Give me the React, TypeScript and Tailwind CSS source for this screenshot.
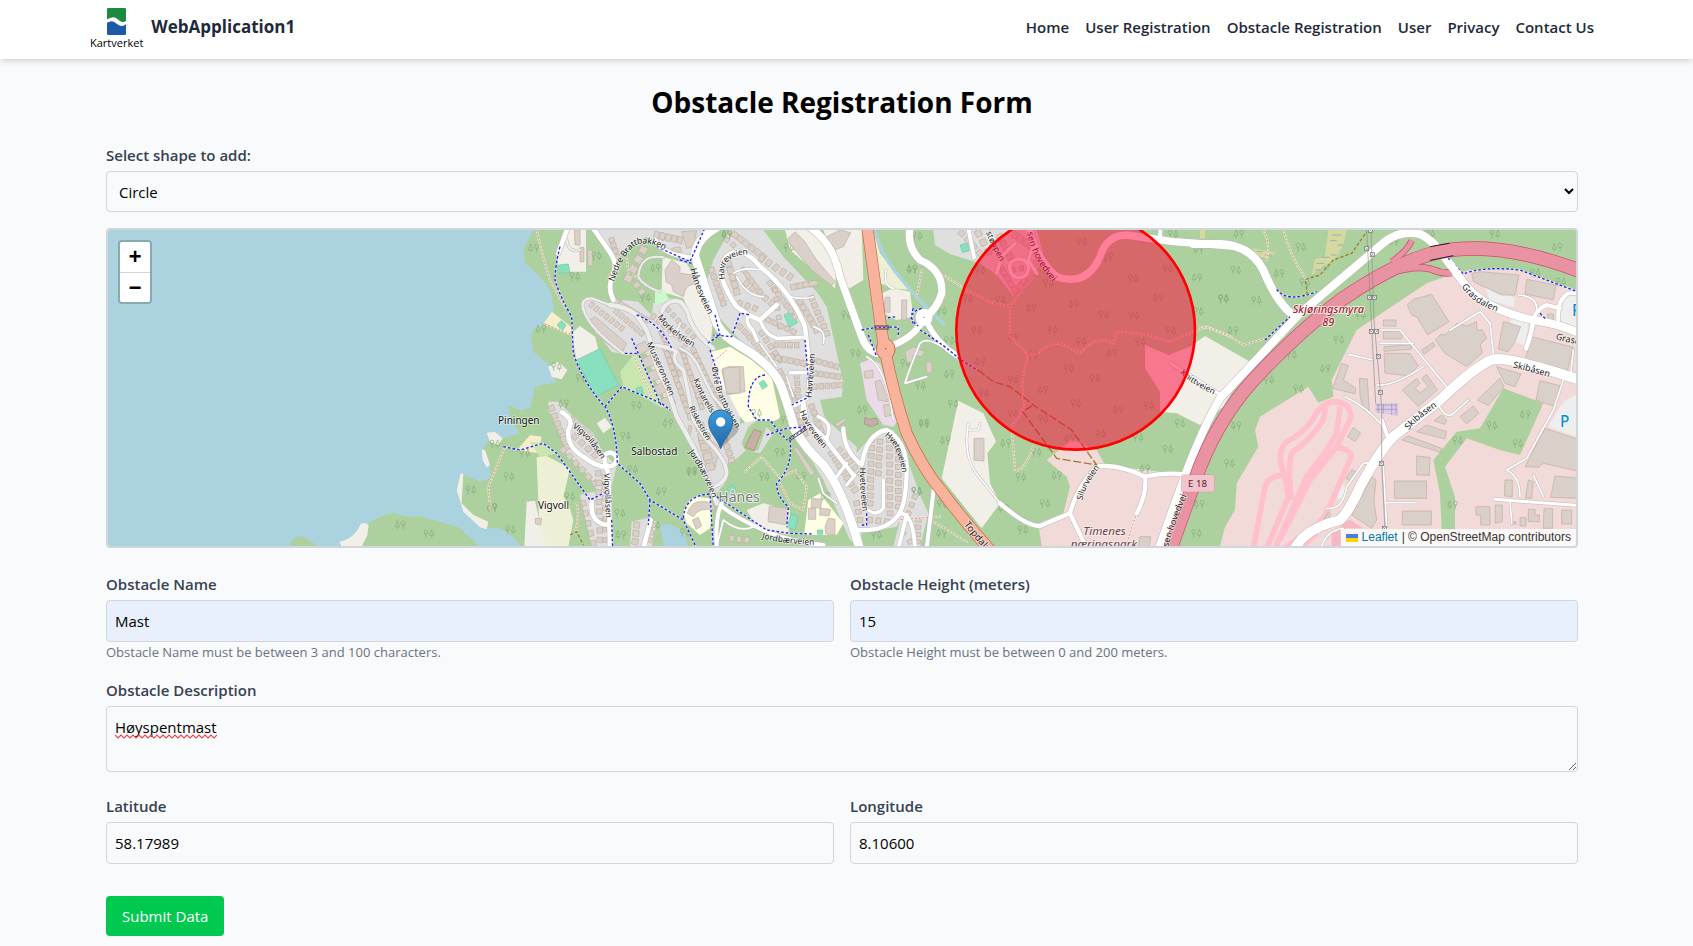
import { useState, type ReactNode } from "react";

/* ------------------------------------------------------------------ */
/* Map data: each sheet has its own origin inside the map drawing.     */
/* ------------------------------------------------------------------ */

type Sheet = "S" | "W" | "H" | "C" | "E";

const ORIGIN: Record<Sheet, string> = {
  S: "translate(-24 -30)",
  W: "translate(1116 -30)",
  H: "translate(1716 -30)",
  C: "translate(2376 -30)",
  E: "translate(3276 -30)",
};

const GREEN = "#add19e";
const WATER = "#aad3df";
const BARE = "#f2efe9";
const HOMES = "#e0dfdf";
const TRADE = "#f2dad9";
const SCHOOL = "#ffffe5";
const FIELD = "#eef0d5";
const PITCH = "#88e0be";
const PAVED = "#eeeeee";

const areas: [Sheet, string, string][] = [
  ["S", GREEN, "M570,980 L575,960 Q600,942 620,955 L655,980Z"],
  ["S", GREEN, "M785,980 L805,910 Q860,875 885,880 Q920,895 955,888 Q1020,905 1075,922 Q1110,950 1138,980Z"],
  ["S", BARE, "M718,965 Q765,955 782,912 Q795,905 806,915 L802,945 785,980 H725Z"],
  ["W", GREEN, "M160,28 L130,90 135,130 175,165 190,182 213,215 222,270 192,315 160,328 152,350 160,395 205,432 230,485 205,492 165,500 152,560 125,572 85,555 90,590 118,640 70,655 45,640 20,638 28,660 5,690 30,740 30,775 0,785 -55,762 -70,800 -60,850 -20,890 20,925 60,925 100,950 122,980 H3400 V28Z"],
  ["W", BARE, "M20,638 L45,636 68,655 55,675 30,665Z M5,688 L15,690 30,735 20,742 8,720Z M-58,760 L-50,762 -55,850 -20,885 25,905 20,928 0,922 -50,875 -70,810Z M205,440 L235,425 262,450 245,478 215,470Z"],
  ["W", WATER, "M540,915 Q570,905 612,935 L624,980 H552Z"],
  ["W", BARE, "M262,30 H318 V155 H235 L232,110Z M275,340 L300,318 345,350 355,388 290,420Z M350,610 L375,593 395,620 370,640Z"],
  ["W", "#f6eec9", "M192,308 L216,275 275,322 270,346Z M112,690 L150,645 185,650 175,700Z"],
  ["W", HOMES, "M305,240 Q330,225 350,238 L395,255 430,240 475,245 515,285 520,250 Q545,235 590,235 L640,270 690,370 700,420 780,540 780,640 740,740 735,790 700,830 680,780 640,690 590,600 570,565 530,490 500,400 440,405 395,395 330,310Z"],
  ["W", HOMES, "M340,30 L640,30 630,125 545,95 500,50 440,80 410,130 385,90Z"],
  ["W", GREEN, "M500,75 L550,100 545,160 530,210 545,240 515,250 470,235 430,230 405,200 420,150 470,100Z"],
  ["W", BARE, "M548,110 L620,130 655,190 700,290 692,368 650,330 610,235 545,215Z"],
  ["W", "#c8e6ae", "M420,455 L460,405 478,405 548,545 560,570 430,500Z M150,665 L195,670 230,700 180,712Z"],
  ["W", HOMES, "M205,545 L235,545 280,590 340,640 370,700 410,735 395,800 395,980 345,980 310,850 350,810 330,770 260,700 240,640 205,570Z M300,825 L340,815 395,900 V980 H335Z M455,905 L500,895 530,905 515,980 H450Z"],
  ["W", FIELD, "M170,712 L200,708 270,745 250,830 265,850 280,900 265,980 H180Z"],
  ["W", BARE, "M140,845 L165,842 195,980 H133Z"],
  ["W", SCHOOL, "M610,880 Q620,835 650,830 L690,835 696,870 690,925 660,945 620,910Z"],
  ["W", "#c8facc", "M525,215 L550,205 568,240 525,255Z"],
  ["H", HOMES, "M150,30 L250,30 310,110 410,215 440,260 490,490 485,530 420,540 430,580 440,600 530,680 530,700 580,640 640,630 690,740 690,840 650,920 545,940 540,980 510,960 430,780 330,610 320,520 280,440 180,360 115,290 75,200 100,120Z"],
  ["H", HOMES, "M690,740 L722,830 745,880 720,980 H640 L660,900Z"],
  ["H", HOMES, "M0,30 H70 L40,90 0,110Z"],
  ["H", BARE, "M315,30 L400,30 470,120 465,205 330,90Z M430,30 H545 L550,180 500,210 480,160Z"],
  ["H", SCHOOL, "M95,395 L150,380 215,420 275,470 300,590 Q290,610 240,600 L200,612 180,590 150,530 105,480Z"],
  ["H", HOMES, "M185,610 L235,600 280,640 240,700 200,690 165,720 120,690 140,640Z"],
  ["H", GREEN, "M205,620 L235,598 260,620 235,690 200,700 185,670Z"],
  ["H", FIELD, "M580,30 L600,100 690,210 640,205 600,190Z"],
  ["H", BARE, "M605,220 L640,205 690,215 700,290 650,300 610,280Z"],
  ["H", "#ebdbe8", "M540,430 L570,418 600,430 655,600 640,620 610,615 560,540Z"],
  ["H", BARE, "M200,870 L250,850 330,870 325,945 230,920Z"],
  ["H", SCHOOL, "M385,840 L420,820 490,910 470,945 372,945Z"],
  ["C", HOMES, "M100,30 H410 L430,100 410,150 340,228 290,165 240,130 150,102 105,75Z"],
  ["C", BARE, "M175,542 L250,580 288,665 262,700 270,790 300,850 245,925 125,775Z"],
  ["C", TRADE, "M440,720 L515,660 590,690 615,735 860,765 830,980 H425 L415,910 490,880 510,800 500,770Z"],
  ["C", BARE, "M735,375 L805,405 870,380 915,348 1050,425 970,560 900,615 830,580 780,575 V515 L735,445Z"],
  ["E", TRADE, "M680,190 L750,165 810,150 960,150 1140,215 V980 H60 L75,920 105,870 110,790 175,680 165,630 180,590 325,500 355,548 400,530 395,480 420,430 470,330Z"],
  ["E", GREEN, "M910,505 L1030,550 960,705 900,690 800,655 735,740 765,830 V930 H725 L720,820 700,720 770,635 840,625Z"],
  ["E", PAVED, "M1085,225 H1140 V325 L1065,300Z M1140,518 L1090,545 1045,620 1140,655Z M850,190 L945,235 940,262 870,240Z M932,290 L985,310 975,378 935,360Z M420,795 L445,800 430,840 408,832Z"],
  ["E", "#d6d99f", "M385,30 H440 L430,75 410,110 335,165 345,118 375,110Z M155,85 L228,98 185,122Z M0,30 H15 V55 H0Z"],
  ["E", "#dccbe6", "M527,550 H595 V588 L527,578Z"],
  ["E", "#f8b7c4", "M425,910 L450,900 490,925 H425Z M395,940 L422,925 V978 H395Z"],
];

const pitches: [Sheet, string][] = [
  ["W", "M290,420 L360,386 416,495 348,530Z"],
  ["W", "M235,135 L265,132 270,158 237,160Z M232,315 L244,302 258,315 247,334Z M468,505 L485,500 490,520 470,522Z"],
  ["H", "M312,285 L335,272 353,308 328,322Z M237,490 L250,480 263,497 248,508Z M335,880 L355,890 345,930 320,922Z M412,930 H428 V943 H412Z M142,805 L158,795 170,815 150,825Z"],
  ["C", "M180,75 L203,68 208,92 187,98Z"],
];

const roads: [Sheet, number, string][] = [
  ["W", 12, "M545,275 Q560,235 600,245 Q620,260 630,300 Q650,350 700,385"],
  ["W", 11, "M515,375 Q570,380 590,395 Q570,420 610,450 L625,520 640,600 680,660 Q740,720 740,760 Q735,790 700,800"],
  ["W", 13, "M390,255 Q440,260 470,285 L500,330 515,375 Q520,430 560,500 L590,590 640,680 690,790 710,850"],
  ["W", 8, "M600,310 Q590,340 570,345 M600,385 Q640,400 660,450 L700,530 760,600"],
  ["W", 7, "M310,270 Q300,235 335,235 L390,255 M310,265 Q320,320 430,400 M300,90 Q265,100 260,60"],
  ["H", 26, "M110,22 Q45,60 45,110 L110,310 Q130,350 180,378 Q270,430 300,490 Q320,540 345,630 Q380,690 430,735 Q490,810 540,990"],
  ["W", 14, "M340,25 L385,90 Q415,130 400,160 Q380,200 400,240"],
  ["W", 14, "M640,115 L590,105 Q550,95 525,60"],
  ["W", 14, "M245,577 Q285,600 265,630 Q260,680 310,710 Q350,742 380,740 Q412,740 410,712 Q395,688 373,705 Q372,725 385,760 L390,985"],
  ["W", 14, "M335,845 Q330,915 390,915 M512,900 L490,985"],
  ["W", 14, "M262,25 L235,100"],
  ["W", 6, "M550,112 Q480,100 475,170 Q490,200 540,215"],
  ["H", 14, "M180,95 Q120,95 125,170 Q140,220 170,260 L205,285 240,300 290,255 M180,95 Q215,105 240,140 Q330,210 375,320 L390,455 385,530 345,555"],
  ["H", 11, "M240,300 Q255,345 290,355 L370,352 M205,285 Q195,310 218,330 L232,362 M332,458 H390 M370,540 L380,600 445,665 M415,590 Q462,610 440,655 M365,590 L370,540"],
  ["H", 5, "M160,160 Q190,140 240,150 M170,170 Q200,230 250,230 M240,370 L290,440 M330,230 Q370,240 400,230 M320,470 L340,530 M400,320 Q440,330 430,370"],
  ["H", 22, "M390,22 Q460,70 480,170 L545,350 Q560,392 592,400"],
  ["H", 22, "M690,22 Q680,80 720,120 Q790,150 785,220 Q770,270 735,290"],
  ["H", 20, "M732,292 Q712,345 640,375"],
  ["C", 16, "M80,305 Q110,370 175,410"],
  ["H", 13, "M445,670 L520,765 M490,625 Q490,690 545,735 Q560,640 620,630 Q675,660 680,740 Q680,850 655,885 Q620,935 535,930"],
  ["H", 10, "M610,780 V865 Q590,890 565,870 M500,730 L470,770 M525,765 L500,795"],
  ["H", 12, "M660,880 Q700,880 705,985 M680,885 L655,985 M762,800 L740,985 M125,850 Q105,890 110,985 M125,860 Q180,900 250,930 Q330,965 430,975"],
  ["H", 5, "M740,470 L675,490 Q690,440 720,370 Q740,350 785,380 M415,775 L430,820 470,850 M110,980 L130,900 Q180,940 220,920 M640,205 Q610,200 618,150 M560,410 Q620,440 640,600"],
  ["C", 22, "M385,22 Q410,120 470,170 Q560,200 600,110 Q620,45 680,45 L820,65 1000,78"],
  ["C", 12, "M205,25 L222,112 M782,22 L780,50"],
  ["C", 10, "M345,120 A28,28 0 1,1 330,150 Q325,125 345,120 M290,160 L305,110 345,70 M405,60 L385,120 410,160"],
  ["C", 5, "M205,610 Q190,700 225,755 L300,850 M205,630 H235 L240,610"],
  ["C", 13, "M300,850 Q380,920 420,918 L510,880 Q530,800 590,740 Q650,730 735,770 Q800,755 860,765 M735,770 Q742,820 710,880 M510,880 L555,975"],
  ["C", 10, "M812,430 L965,527"],
  ["E", 24, "M-20,72 H60 Q150,75 190,150 Q230,250 285,290"],
  ["E", 24, "M-125,990 L-50,780 Q10,620 60,535 L300,280 555,65 Q600,30 660,42 Q700,60 740,120 L800,200 Q860,270 1000,300 Q1070,310 1140,340"],
  ["E", 30, "M280,1000 Q300,930 420,900 Q450,870 480,800 Q540,690 580,650 L720,540 Q830,435 880,418 Q930,410 1140,480"],
  ["E", 12, "M1140,220 H1105 Q1070,240 1075,300 M1000,300 Q1010,265 1040,255 L1080,265 M545,600 L565,655"],
  ["E", 14, "M1000,300 Q995,340 978,385"],
  ["E", 9, "M885,838 L1140,857"],
  ["E", 5, "M435,530 Q500,560 550,620 M445,403 L520,420 M540,330 H600 L740,500 M530,495 Q580,500 670,440 M555,848 H650 M380,865 Q430,870 440,800 L490,730 530,725 M550,740 L560,920 M750,330 L840,275 870,310 880,400 M1090,480 L1060,570 980,715 920,750 Q960,770 960,830 M1000,765 L1030,830 M540,370 H640 M715,555 Q740,600 760,580 L805,540 M365,980 Q380,930 430,925 M955,225 Q1010,230 1010,265 M930,840 L935,910 M1110,480 L1120,390"],
];

const roadFill = (sheet: Sheet, width: number) => (sheet === "W" && width < 14 ? "#ededed" : "#ffffff");

const racing = [
  "M160,985 L195,800 Q205,770 245,765",
  "M200,985 L265,830 Q255,760 242,730 Q235,670 280,655 Q330,620 345,585 Q370,545 405,545 Q460,550 450,600 L410,680 330,780 240,960",
  "M275,840 Q262,750 275,700 Q340,650 370,600 L378,560",
  "M225,985 L320,770 380,690 410,640 420,560",
  "M410,682 Q465,690 450,720 L375,890 Q340,930 250,985",
  "M300,985 L350,940",
];

const cycleways: [Sheet, string][] = [
  ["W", "M240,80 Q225,140 225,180 Q240,230 275,290 L280,400 Q310,490 375,560 Q410,620 412,730 L480,790 510,840 610,900 650,985"],
  ["W", "M375,560 L425,500 545,550 570,570 M70,680 L120,690 190,670 230,700 330,840 380,815 M530,80 L630,125 672,30 M470,285 Q540,310 575,385 M455,355 L545,560 M435,400 H470 M510,840 L505,915 M610,895 Q615,825 690,822 L700,985 M395,900 L398,985"],
  ["H", "M105,285 L120,345 80,372 M180,280 L155,350 100,345 M185,280 L210,285 M375,360 L390,530 335,555 M90,390 L125,500 M255,465 Q205,470 205,560 L230,600 270,600 300,640 322,660 M260,645 L320,625 380,620 M330,660 Q340,740 290,790 Q290,830 325,860 L320,920 M110,830 L260,930 330,940 400,942 M560,880 V915 H540"],
  ["H", "M545,330 L600,320 655,322 655,350 M565,345 L590,410 M610,295 L650,290 M700,265 Q685,300 715,318 M0,120 L35,130"],
  ["C", "M65,265 Q20,280 40,310 M60,330 Q140,380 175,415 L235,452"],
  ["E", "M230,208 Q260,250 350,215 M195,360 L270,290 M745,115 L790,162 Q850,138 960,150 L1140,218 M1020,280 L1040,300"],
];

const footways: [Sheet, string][] = [
  ["W", "M170,30 Q190,120 210,180 L255,262 M75,680 L25,800 30,870 M460,405 L520,540 M285,940 Q300,880 290,850 M440,110 L445,160 M460,165 L530,215 M195,312 L270,342"],
  ["H", "M195,755 L245,710 300,775 345,750 380,800 370,870 330,850 300,790 M95,430 L140,390 M640,900 L780,890"],
  ["C", "M65,150 L50,230 M130,165 L200,210 280,250 330,258 V350 L385,405 415,400 Q440,370 480,370 L540,400 Q590,340 640,370 L650,335 Q720,335 810,365 L920,320 990,350 M385,405 Q360,480 370,530 L375,560 335,620 345,750 Q370,760 400,680 M330,258 L400,170 M100,905 L200,965 M710,880 L680,970"],
  ["E", "M0,320 Q60,325 130,375 L195,355 M250,30 Q270,110 320,180 M190,30 Q212,70 200,120"],
];

const tracks: [Sheet, string][] = [
  ["C", "M235,450 L280,485 330,500 400,555 515,630 590,735 470,715 368,575 400,555"],
  ["E", "M322,225 L316,178 360,165 400,120 455,100 500,35"],
  ["W", "M270,945 L290,935 310,975"],
];

const buildings: [Sheet, string][] = [
  ["E", "M622,255 L640,238 695,223 747,305 683,345 650,290 635,285Z M706,360 L722,343 735,345 770,310 800,318 830,305 830,330 848,330 860,355 840,375 848,398 800,440 735,400Z"],
  ["E", "M815,160 L840,155 957,165 945,225 905,225 820,185Z M980,178 L1068,195 1060,240 975,222Z M910,305 L962,320 945,365 925,395 895,388Z M995,350 L1120,382 1100,460 975,420Z"],
  ["E", "M552,400 H630 L655,437 625,467 555,460Z M550,300 H588 V318 H550Z M550,335 L580,332 H605 V357 H550Z M552,380 L634,374 V388 L552,394Z M665,390 L700,367 705,378 672,403Z"],
  ["E", "M607,510 L650,475 660,490 645,505 660,518 685,500 665,475 680,463 712,510 655,560Z M425,430 L445,437 430,480 468,505 465,522 398,505Z M478,475 L502,477 508,570 492,570 480,530Z"],
  ["E", "M890,440 L963,462 945,500 915,490Z M832,540 L900,475 912,500 865,557Z M780,590 L820,558 837,580 800,612Z M702,602 L725,585 740,600 735,613Z M650,635 L680,615 740,635 735,657Z M605,660 L625,648 725,685 720,697Z"],
  ["E", "M1020,482 L1080,497 1065,560 1008,540Z M1035,625 L1140,660 V755 L1030,730 1015,742 975,740Z M650,708 L690,712 688,766 650,765Z M583,783 H680 V835 H583Z M607,873 H694 V915 H607Z"],
  ["E", "M515,770 L528,780 522,845 530,900 515,925 455,885Z M460,622 L482,640 465,665 442,650Z M455,748 L470,758 452,785 438,775Z M385,877 L392,882 382,902 373,895Z"],
  ["E", "M828,860 H870 V915 H842 V885 H828Z M885,855 H907 V905 L885,910Z M915,780 H937 V830 L913,828Z M985,780 L1000,785 995,835 976,835Z M1065,768 L1140,775 V835 L1052,832Z M1032,866 H1058 V925 H1030Z M985,868 H1005 V885 H1018 V905 H985Z M1085,870 H1115 V912 H1085Z M1043,282 H1060 V300 H1043Z M935,905 H948 V912 H935Z M960,893 H978 V918 H960Z"],
  ["H", "M125,450 L145,440 190,440 195,515 142,525Z M320,60 L345,35 372,62 410,120 465,185 455,197 395,150Z M440,50 L480,30 512,38 490,80 462,90Z M268,858 L325,865 322,915 264,905Z M552,455 L578,450 580,472 555,475Z M585,485 L602,480 625,545 595,540Z M610,555 L635,552 640,585 615,590Z M465,612 L495,593 498,602 470,622Z M675,395 L700,380 735,395 725,410 700,405 695,430 680,425Z M738,427 L755,425 757,458 740,460Z"],
  ["H", "M395,835 L425,838 422,865 393,862Z M420,865 L452,868 448,888 418,885Z M435,920 L445,895 465,897 465,945 437,942Z M385,865 H407 V898 H385Z M615,232 H630 V278 L612,275Z M665,240 H680 V300 H665Z M340,685 L352,683 405,760 392,768Z M57,635 L90,640 92,660 118,680 105,745 80,740 55,660Z"],
  ["C", "M222,655 H252 V723 L222,721Z M720,950 L752,950 748,980 715,980Z"],
  ["W", "M555,150 L575,120 600,140 600,160 640,165 645,190 620,200 610,230 580,215 575,195 558,185Z M328,300 L345,290 440,370 425,400 400,385 345,340Z M283,30 H300 V75 H285Z M300,82 H312 V125 H300Z M322,90 H337 V138 H324Z M728,445 L780,440 V520 L740,520Z"],
  ["W", "M622,880 Q635,830 700,850 L705,870 Q655,860 640,890Z M637,900 L655,892 665,918 648,928Z M612,640 H622 L628,615 636,618 628,655 612,650Z M165,895 L185,895 182,915 167,912Z M575,85 L600,80 605,95 580,100Z M605,35 L650,32 640,80 620,85Z"],
];

const darkBuildings: [Sheet, string][] = [
  ["H", "M222,628 L245,635 222,692 195,682 205,660Z M555,592 L568,598 590,594 594,612 575,620 553,612Z"],
];

/* Rows of houses: sheet, start, end, count, width, height */
const houseRows: [Sheet, number, number, number, number, number, number, number][] = [
  ["W", 485, 385, 565, 545, 5, 36, 30],
  ["W", 520, 290, 620, 370, 7, 18, 12],
  ["W", 545, 340, 600, 460, 8, 14, 16],
  ["W", 555, 385, 630, 590, 12, 15, 18],
  ["W", 605, 390, 665, 560, 11, 13, 18],
  ["W", 640, 390, 720, 560, 11, 14, 18],
  ["W", 565, 270, 640, 350, 6, 14, 12],
  ["W", 410, 245, 500, 300, 7, 15, 14],
  ["W", 410, 275, 485, 340, 6, 15, 14],
  ["W", 335, 255, 425, 325, 7, 16, 12],
  ["W", 395, 60, 412, 110, 4, 16, 14],
  ["W", 490, 90, 445, 175, 4, 24, 22],
  ["W", 470, 195, 485, 215, 2, 18, 16],
  ["W", 530, 45, 600, 60, 5, 20, 15],
  ["W", 660, 620, 690, 740, 5, 26, 22],
  ["W", 720, 620, 755, 720, 6, 18, 16],
  ["W", 215, 565, 260, 680, 6, 17, 17],
  ["W", 275, 600, 345, 660, 5, 17, 17],
  ["W", 285, 650, 345, 705, 4, 17, 17],
  ["W", 250, 690, 345, 790, 6, 17, 17],
  ["W", 355, 760, 360, 960, 8, 17, 16],
  ["W", 310, 850, 340, 970, 5, 15, 17],
  ["W", 372, 770, 375, 960, 7, 12, 14],
  ["W", 470, 915, 465, 965, 3, 18, 18],
  ["W", 520, 915, 510, 960, 3, 14, 14],
  ["H", 95, 150, 130, 250, 6, 17, 16],
  ["H", 140, 60, 160, 75, 2, 14, 14],
  ["H", 165, 45, 250, 110, 6, 17, 18],
  ["H", 145, 130, 170, 215, 5, 18, 20],
  ["H", 180, 250, 225, 265, 3, 17, 14],
  ["H", 200, 190, 275, 250, 5, 18, 16],
  ["H", 190, 150, 240, 215, 5, 14, 16],
  ["H", 245, 115, 330, 170, 5, 20, 15],
  ["H", 270, 190, 345, 290, 7, 15, 15],
  ["H", 285, 210, 300, 320, 5, 15, 13],
  ["H", 265, 300, 340, 335, 5, 15, 16],
  ["H", 345, 200, 400, 190, 4, 16, 26],
  ["H", 360, 245, 410, 330, 6, 18, 16],
  ["H", 395, 235, 440, 340, 6, 17, 16],
  ["H", 180, 320, 250, 400, 6, 15, 15],
  ["H", 245, 340, 300, 420, 5, 15, 16],
  ["H", 290, 375, 350, 375, 4, 17, 14],
  ["H", 275, 410, 370, 430, 6, 17, 15],
  ["H", 300, 455, 345, 540, 6, 16, 15],
  ["H", 350, 470, 355, 530, 4, 15, 14],
  ["H", 400, 420, 470, 440, 5, 16, 14],
  ["H", 405, 460, 475, 470, 5, 16, 14],
  ["H", 405, 500, 480, 495, 5, 16, 14],
  ["H", 395, 560, 430, 650, 6, 17, 15],
  ["H", 350, 570, 375, 640, 5, 15, 18],
  ["H", 455, 700, 525, 810, 7, 18, 15],
  ["H", 480, 690, 540, 760, 5, 16, 14],
  ["H", 575, 660, 570, 850, 9, 18, 15],
  ["H", 600, 665, 595, 760, 5, 17, 15],
  ["H", 628, 660, 630, 880, 10, 17, 15],
  ["H", 655, 670, 655, 860, 9, 17, 15],
  ["H", 530, 850, 540, 900, 3, 17, 15],
  ["H", 570, 900, 620, 905, 3, 17, 15],
  ["H", 705, 830, 685, 880, 3, 15, 15],
  ["H", 715, 900, 712, 965, 4, 18, 13],
  ["H", 670, 940, 690, 965, 2, 15, 13],
  ["H", 155, 955, 200, 960, 3, 18, 14],
  ["C", 185, 40, 240, 100, 4, 17, 18],
  ["C", 235, 40, 265, 95, 3, 18, 20],
  ["C", 300, 50, 330, 110, 4, 18, 16],
  ["C", 345, 45, 395, 80, 4, 20, 16],
  ["C", 300, 140, 345, 210, 5, 16, 18],
  ["C", 360, 200, 405, 130, 5, 16, 18],
  ["C", 340, 150, 365, 145, 2, 14, 12],
];

const trees: Record<Sheet, number[][]> = {
  S: [[900, 915], [987, 942], [1113, 810], [1176, 864], [1185, 672]],
  W: [[160, 85], [285, 170], [350, 108], [182, 328], [230, 440], [303, 475], [250, 552], [135, 700], [470, 556], [563, 610], [437, 648], [635, 755], [543, 815], [458, 748], [87, 770], [35, 862], [92, 930], [270, 830], [422, 945], [525, 916], [497, 233], [526, 145], [540, 50], [616, 938], [740, 45], [420, 880]],
  H: [[140, 40], [327, 83], [712, 48], [695, 147], [500, 285], [527, 400], [546, 570], [677, 430], [722, 497], [732, 610], [300, 697], [254, 770], [363, 768], [711, 813], [590, 945], [436, 830], [230, 580], [318, 600], [35, 755]],
  C: [[36, 148], [125, 273], [148, 362], [147, 463], [160, 552], [72, 612], [135, 662], [50, 815], [127, 852], [124, 940], [203, 237], [302, 240], [393, 265], [240, 152], [230, 332], [340, 352], [458, 330], [400, 405], [240, 425], [507, 447], [545, 365], [521, 253], [612, 285], [702, 287], [774, 234], [813, 333], [722, 366], [635, 400], [585, 476], [528, 551], [654, 570], [747, 557], [603, 643], [508, 655], [430, 597], [340, 480], [428, 510], [252, 520], [340, 583], [316, 670], [410, 697], [363, 772], [470, 767], [435, 851], [369, 930], [310, 865], [715, 653], [804, 688], [734, 747], [840, 611], [546, 66], [623, 112], [700, 177], [804, 147], [890, 174], [970, 237], [820, 43], [895, 88], [895, 275], [446, 190], [897, 853], [890, 940]],
  E: [[116, 42], [108, 151], [303, 82], [237, 161], [72, 236], [170, 242], [98, 332], [315, 188], [417, 360], [375, 446], [207, 480], [296, 507], [108, 617], [89, 731], [885, 42], [1071, 82], [1006, 158], [1083, 186], [580, 65], [482, 285], [876, 617], [975, 584], [774, 662], [954, 671], [757, 855], [690, 42], [275, 405]],
};

const labels: [Sheet, number, string, string][] = [
  ["W", 26, "Nedre Brattbakken", "M396,184 Q415,120 450,82 Q490,40 580,98"],
  ["W", 27, "Hånesveien", "M637,145 Q650,210 700,300"],
  ["W", 25, "Morkelstien", "M537,287 Q570,340 650,380"],
  ["W", 25, "Musseronstien", "M505,368 Q540,440 580,540"],
  ["W", 25, "Vigvollåsen", "M280,617 Q330,650 375,725"],
  ["W", 25, "Vigvollåsen", "M378,760 L385,920"],
  ["W", 24, "Øvre Brattbakken", "M702,440 Q706,530 792,650"],
  ["W", 24, "Kantarellst", "M646,477 Q664,530 712,600"],
  ["W", 24, "Riskestien", "M632,560 Q648,600 692,670"],
  ["W", 25, "Jordbærveien", "M630,693 Q680,760 708,850"],
  ["H", 25, "Havreveien", "M130,178 Q110,105 200,97"],
  ["H", 25, "Havreveien", "M388,532 Q395,470 400,380"],
  ["H", 25, "Havreveien", "M364,572 Q380,620 450,700"],
  ["H", 25, "Hveteveien", "M545,743 Q545,800 556,890"],
  ["H", 25, "Hveteveien", "M617,643 Q660,670 674,770"],
  ["H", 25, "Jordbærveien", "M247,949 Q310,966 430,970"],
  ["C", 25, "støppen", "M264,36 Q280,80 320,145"],
  ["C", 27, "sen hovedvei", "M388,36 Q400,120 480,200"],
  ["C", 25, "Knittveien", "M844,455 Q880,490 960,525"],
  ["C", 25, "Silurveien", "M541,840 Q550,790 610,720"],
  ["C", 29, "Topdalsveien", "M196,910 Q240,970 330,1060"],
  ["C", 27, "sen hovedvei", "M799,980 Q820,900 870,790"],
  ["E", 27, "Grasdalen", "M790,195 Q820,250 920,278"],
  ["E", 27, "Grasdalen", "M1068,350 Q1100,365 1200,375"],
  ["E", 27, "Skibåsen", "M940,437 Q1000,450 1080,475"],
  ["E", 27, "Skibåsen", "M622,627 Q650,590 730,540"],
];

const towers: number[][] = [[511, 31], [500, 86], [517, 104], [509, 232], [523, 232], [514, 334], [530, 334], [535, 409], [541, 517], [544, 730], [553, 925]];

function On({ sheet, children }: { sheet: Sheet; children: ReactNode }) {
  return <g transform={ORIGIN[sheet]}>{children}</g>;
}

function HouseRow({ row }: { row: (typeof houseRows)[number] }) {
  const [, x1, y1, x2, y2, n, w, h] = row;
  const angle = (Math.atan2(y2 - y1, x2 - x1) * 180) / Math.PI - 90;
  return (
    <>
      {Array.from({ length: n }, (_, i) => {
        const t = n > 1 ? i / (n - 1) : 0;
        const x = x1 + (x2 - x1) * t;
        const y = y1 + (y2 - y1) * t;
        return (
          <rect key={i} x={x - w / 2} y={y - h / 2} width={w} height={h} transform={`rotate(${angle + ((i * 7) % 3) * 4} ${x} ${y})`} />
        );
      })}
    </>
  );
}

function MapDrawing() {
  return (
    <svg viewBox="0 0 4404 948" preserveAspectRatio="xMidYMid slice" className="block h-full w-full" role="img" aria-label="Map of Hånes">
      <defs>
        <g id="grove" fill="none" stroke="#86a97b" strokeWidth="2">
          <path d="M-9,13 V-1 M-9,4 L-13,0" />
          <circle cx="-9" cy="-6" r="6" />
          <path d="M8,13 V5 M8,-13 L14,5 H2Z" />
        </g>
        <g id="grove-b" fill="none" stroke="#86a97b" strokeWidth="2">
          <path d="M9,13 V-1 M9,4 L13,0" />
          <circle cx="9" cy="-6" r="6" />
          <path d="M-8,13 V5 M-8,-13 L-14,5 H-2Z" />
        </g>
        <linearGradient id="pin" x1="0" x2="0" y1="0" y2="1">
          <stop offset="0" stopColor="#3d9bdb" />
          <stop offset="1" stopColor="#2367a3" />
        </linearGradient>
      </defs>

      <rect width="4404" height="948" fill={WATER} />
      {areas.map(([s, fill, d], i) => (
        <On key={i} sheet={s}><path d={d} fill={fill} /></On>
      ))}
      {pitches.map(([s, d], i) => (
        <On key={i} sheet={s}><path d={d} fill={PITCH} stroke="#6fc9a6" strokeWidth="2" /></On>
      ))}
      <On sheet="H">
        <path d="M585,25 Q600,100 650,160 Q720,250 795,315" fill="none" stroke={WATER} strokeWidth="10" />
      </On>
      <On sheet="E">
        <path d="M395,45 h30 M390,62 h20 M412,75 h18 M365,112 h24 M392,105 h18 M350,130 h22 M370,142 h16 M345,150 h14 M170,95 h18 M195,105 h20 M180,115 h14" stroke="#6d9fc4" strokeWidth="2" />
      </On>

      {(Object.keys(trees) as Sheet[]).map((s) => (
        <On key={s} sheet={s}>
          {trees[s].map(([x, y], i) => (
            <use key={i} href={i % 3 === 0 ? "#grove-b" : "#grove"} x={x} y={y} />
          ))}
        </On>
      ))}

      <On sheet="E">
        {racing.map((d) => (
          <path key={d} d={d} fill="none" stroke="#ffc0cb" strokeWidth="17" strokeLinejoin="round" />
        ))}
        <path d="M535,552 V578 M550,552 V580 M575,550 V585 M588,550 V585 M527,555 H590 M527,568 H590" fill="none" stroke="#9a8fb0" strokeWidth="2" />
      </On>

      <g fill="#d9d0c9" stroke="#bfae9f" strokeWidth="2">
        {buildings.map(([s, d], i) => (
          <On key={i} sheet={s}><path d={d} /></On>
        ))}
        {houseRows.map((row, i) => (
          <On key={i} sheet={row[0]}><HouseRow row={row} /></On>
        ))}
      </g>
      {darkBuildings.map(([s, d], i) => (
        <On key={i} sheet={s}><path d={d} fill="#c4b0a4" stroke="#a08a7c" strokeWidth="2" /></On>
      ))}

      <g fill="none" strokeLinecap="round" strokeLinejoin="round">
        {footways.map(([s, d], i) => (
          <On key={i} sheet={s}>
            <path d={d} stroke="#ffffff" strokeOpacity="0.45" strokeWidth="7" />
            <path d={d} stroke="#ee8a7c" strokeWidth="3" strokeDasharray="4 7" />
          </On>
        ))}
        {roads.map(([s, w, d], i) => (
          <On key={i} sheet={s}><path d={d} stroke="#bdbab8" strokeWidth={w + 3} /></On>
        ))}
        <On sheet="H"><circle cx="732" cy="292" r="20" fill="#fff" stroke="#bdbab8" strokeWidth="14" /></On>
        {roads.map(([s, w, d], i) => (
          <On key={i} sheet={s}><path d={d} stroke={roadFill(s, w)} strokeWidth={w} /></On>
        ))}
        <On sheet="H">
          <circle cx="732" cy="292" r="20" fill="#fff" stroke="#fff" strokeWidth="11" />
          <circle cx="732" cy="292" r="2" fill="#a06060" />
        </On>
      </g>

      <g fill="none" strokeLinejoin="round">
        {cycleways.map(([s, d], i) => (
          <On key={i} sheet={s}>
            <path d={d} stroke="#ffffff" strokeOpacity="0.5" strokeWidth="6" />
            <path d={d} stroke="#2222e8" strokeWidth="4" strokeDasharray="8 6" />
          </On>
        ))}
        {tracks.map(([s, d], i) => (
          <On key={i} sheet={s}><path d={d} stroke="#a5782c" strokeWidth="4" strokeDasharray={s === "C" ? "24 8" : "10 6"} /></On>
        ))}
        <On sheet="H">
          <path d="M562,20 L600,300 Q605,340 615,390 Q640,520 680,640 Q730,750 790,820 Q850,900 930,990" stroke="#c96848" strokeWidth="36" />
          <ellipse cx="617" cy="388" rx="28" ry="32" fill="#f9b29c" stroke="#c96848" strokeWidth="3" />
          <path d="M562,20 L600,300 Q605,340 615,390 Q640,520 680,640 Q730,750 790,820 Q850,900 930,990" stroke="#f9b29c" strokeWidth="32" />
          <circle cx="617" cy="386" r="2" fill="#8a4030" />
          <path d="M583,318 H628 M583,327 H628 M326,655 L378,620 M330,662 L382,627" stroke="#444" strokeWidth="3" />
          <path d="M583,322 H628 M328,658 L380,623" stroke="#2222e8" strokeWidth="3" strokeDasharray="7 6" />
        </On>
        <On sheet="E">
          <path d="M575,125 Q620,95 635,62" stroke="#cf4a70" strokeWidth="19" />
          <path d="M560,160 Q660,132 700,150 Q730,162 755,158" stroke="#cf4a70" strokeWidth="22" />
          <path d="M-90,990 L0,740 Q60,590 160,480 Q300,330 430,235 Q600,120 720,95 Q900,60 1145,155" stroke="#cf4a70" strokeWidth="43" />
          <path d="M575,125 Q620,95 635,62" stroke="#e892a2" strokeWidth="15" />
          <path d="M560,160 Q660,132 700,150 Q730,162 755,158" stroke="#e892a2" strokeWidth="18" />
          <path d="M-90,990 L0,740 Q60,590 160,480 Q300,330 430,235 Q600,120 720,95 Q900,60 1145,155" stroke="#e892a2" strokeWidth="39" />
          <path d="M743,124 L780,172" stroke="#fff" strokeWidth="24" />
          <path d="M690,80 L748,70 M690,121 L760,107" stroke="#222" strokeWidth="3" />
          <path d="M500,30 L520,420 527,550 M513,30 L522,300 545,560 V730 L555,930" stroke="#8d8d8d" strokeWidth="2" />
        </On>
      </g>
      <On sheet="E">
        {towers.map(([x, y]) => (
          <g key={`${x}-${y}`}>
            <rect x={x - 6} y={y - 6} width="12" height="12" fill="#fff" stroke="#666" strokeWidth="2" />
            <path d={`M${x - 4},${y - 4} l8,8 M${x + 4},${y - 4} l-8,8`} stroke="#777" strokeWidth="2" />
          </g>
        ))}
      </On>

      <g fontFamily="'Noto Sans', sans-serif" fill="#222" stroke="#fff" strokeOpacity="0.6" strokeWidth="5" strokeLinejoin="round" paintOrder="stroke">
        {labels.map(([s, size, text, d], i) => (
          <On key={i} sheet={s}>
            <path id={`street-${i}`} d={d} fill="none" stroke="none" />
            <text fontSize={size} dy="6"><textPath href={`#street-${i}`}>{text}</textPath></text>
          </On>
        ))}
        <On sheet="W">
          <g fontSize="30" fill="#111">
            <text x="54" y="613">Piningen</text>
            <text x="454" y="705">Salbostad</text>
            <text x="174" y="867">Vigvoll</text>
          </g>
        </On>
        <On sheet="H"><text x="115" y="847" fontSize="42" fill="#777" strokeOpacity="0.9">Hånes</text></On>
        <On sheet="C">
          <g fontSize="35" fontStyle="italic" fill="#6b4040">
            <text x="550" y="945">Timenes</text>
            <text x="512" y="985">næringspark</text>
          </g>
          <rect x="845" y="765" width="98" height="50" rx="4" fill="#f2c4ce" stroke="#c97b8f" strokeWidth="3" />
          <text x="864" y="800" fontSize="29" fill="#5e1a30" stroke="none">E 18</text>
        </On>
        <On sheet="E">
          <g fontSize="33" fontStyle="italic" fontWeight="500" fill="#a6192e" textAnchor="middle" strokeOpacity="0.9">
            <text x="385" y="278">Skjøringsmyra</text>
            <text x="385" y="317">89</text>
          </g>
          <g fontSize="46" fontWeight="500" fill="#0092da">
            <text x="1080" y="622">P</text>
            <text x="1116" y="289">P</text>
          </g>
        </On>
      </g>

      <On sheet="C">
        <circle cx="527" cy="331" r="358" fill="#ff0033" fillOpacity="0.5" stroke="#ff0000" strokeWidth="8" />
      </On>

      <On sheet="W">
        <path d="M722,685 L765,645 Q785,625 770,612 Q750,605 735,640Z" fill="#000" fillOpacity="0.2" />
        <path d="M722,686 C712,655 686,637 686,606 A36,36 0 0,1 758,606 C758,637 732,655 722,686Z" fill="url(#pin)" stroke="#2a6da5" strokeWidth="3" />
        <circle cx="722" cy="606" r="14" fill="#fff" />
      </On>
    </svg>
  );
}

/* ------------------------------------------------------------------ */
/* Page                                                                */
/* ------------------------------------------------------------------ */

const navItems = ["Home", "User Registration", "Obstacle Registration", "User", "Privacy", "Contact Us"];

const labelClass = "mb-1 block text-[15px] leading-6 font-semibold text-gray-700";
const inputClass = "block h-[42px] w-full rounded border border-gray-300 px-2 text-[15px] text-black";

function Logo() {
  return (
    <span className="flex flex-col items-center">
      <svg viewBox="0 0 57 81" className="h-[27px] w-[19px]" aria-hidden="true">
        <path d="M4,0 H53 Q57,0 57,4 V38 Q48,46 38,38 Q22,24 12,29 Q5,31 0,34 V4 Q0,0 4,0Z" fill="#1c8a3c" />
        <path d="M0,44 Q12,36 22,42 Q36,54 46,54 Q53,53 57,49 V77 Q57,81 53,81 H4 Q0,81 0,77Z" fill="#1d5aa5" />
      </svg>
      <span className="text-[11px] leading-4 text-black">Kartverket</span>
    </span>
  );
}

function Header() {
  return (
    <header className="relative bg-white pr-[9px] shadow-md">
      <div className="mx-auto flex max-w-[1536px] items-center justify-between px-4 py-2">
        <a href="#home" className="flex items-center gap-2">
          <Logo />
          <span className="pb-1.5 text-[17px] leading-7 font-bold text-gray-800">WebApplication1</span>
        </a>
        <nav className="flex gap-4 pb-1.5">
          {navItems.map((item) => (
            <a key={item} href={`#${item.toLowerCase().replace(" ", "-")}`} className="text-[15px] leading-6 font-semibold text-gray-800">
              {item}
            </a>
          ))}
        </nav>
      </div>
    </header>
  );
}

function MapPanel() {
  return (
    <div className="relative h-80 w-full overflow-hidden rounded border-2 border-gray-300">
      <MapDrawing />
      <div className="absolute top-2.5 left-2.5 flex flex-col overflow-hidden rounded border-2 border-black/20 bg-clip-padding font-['Liberation_Mono',monospace] text-[22px] font-bold text-black">
        <button type="button" aria-label="Zoom in" className="h-[30px] w-[30px] bg-white pt-1 leading-[26px]">+</button>
        <button type="button" aria-label="Zoom out" className="h-[30px] w-[30px] border-t border-gray-300 bg-white pt-1 leading-[26px]">−</button>
      </div>
      <div className="absolute right-0 bottom-0 flex items-center gap-1 bg-white/80 px-[5px] font-['Liberation_Sans',sans-serif] text-[12px] leading-[17px] text-[#333]">
        <a href="#leaflet" className="flex items-center gap-1 text-[#0078a8]">
          <svg viewBox="0 0 12 8" className="h-2 w-3" aria-hidden="true">
            <path fill="#4c7be1" d="M0 0h12v4H0z" />
            <path fill="#ffd500" d="M0 4h12v4H0z" />
          </svg>
          Leaflet
        </a>
        <span>| © OpenStreetMap contributors</span>
      </div>
    </div>
  );
}

function Squiggle() {
  return (
    <svg viewBox="0 0 102 5" className="pointer-events-none absolute top-[28px] left-[9px] h-[5px] w-[102px]" aria-hidden="true">
      <path d={"M0,1 " + "l3,3 l3,-3 ".repeat(17)} fill="none" stroke="#e5484d" strokeWidth="1.2" />
    </svg>
  );
}

export default function App() {
  const [shape, setShape] = useState("Circle");
  return (
    <div className="min-h-screen bg-gray-50 font-['Open_Sans','Noto_Sans',sans-serif]">
      <Header />
      <div className="pr-[9px]">
        <main className="mx-auto max-w-[1536px] px-8 pt-6 pb-2.5">
          <h1 className="mb-[22px] text-center text-[28px] leading-[38px] font-bold text-black">Obstacle Registration Form</h1>
          <form onSubmit={(e) => e.preventDefault()}>
            <label htmlFor="shape" className={labelClass}>Select shape to add:</label>
            <select
              id="shape"
              value={shape}
              onChange={(e) => setShape(e.target.value)}
              className="mb-4 block h-[41px] w-full rounded border border-gray-300 bg-gray-50 px-2 text-[15px] text-black"
            >
              <option>Circle</option>
              <option>Marker</option>
              <option>Polygon</option>
            </select>

            <MapPanel />

            <div className="mt-6 grid grid-cols-2 gap-4">
              <div>
                <label htmlFor="name" className={labelClass}>Obstacle Name</label>
                <input id="name" defaultValue="Mast" className={`${inputClass} bg-[#e8f0fe]`} />
                <p className="text-[13px] leading-5 text-gray-500">Obstacle Name must be between 3 and 100 characters.</p>
              </div>
              <div>
                <label htmlFor="height" className={labelClass}>Obstacle Height (meters)</label>
                <input id="height" defaultValue="15" className={`${inputClass} bg-[#e8f0fe]`} />
                <p className="text-[13px] leading-5 text-gray-500">Obstacle Height must be between 0 and 200 meters.</p>
              </div>
            </div>

            <div className="mt-4">
              <label htmlFor="description" className={labelClass}>Obstacle Description</label>
              <div className="relative">
                <textarea
                  id="description"
                  rows={2}
                  defaultValue="Høyspentmast"
                  className="block h-[66px] w-full rounded border border-gray-300 p-2 text-[15px] leading-6 text-black"
                />
                <Squiggle />
              </div>
            </div>

            <div className="mt-[22px] grid grid-cols-2 gap-4">
              <div>
                <label htmlFor="latitude" className={labelClass}>Latitude</label>
                <input id="latitude" defaultValue="58.17989" className={inputClass} />
              </div>
              <div>
                <label htmlFor="longitude" className={labelClass}>Longitude</label>
                <input id="longitude" defaultValue="8.10600" className={inputClass} />
              </div>
            </div>

            <button type="submit" className="mt-8 block h-10 rounded bg-[#00c950] px-4 text-[15px] text-white">Submit Data</button>
          </form>
        </main>
      </div>
    </div>
  );
}
